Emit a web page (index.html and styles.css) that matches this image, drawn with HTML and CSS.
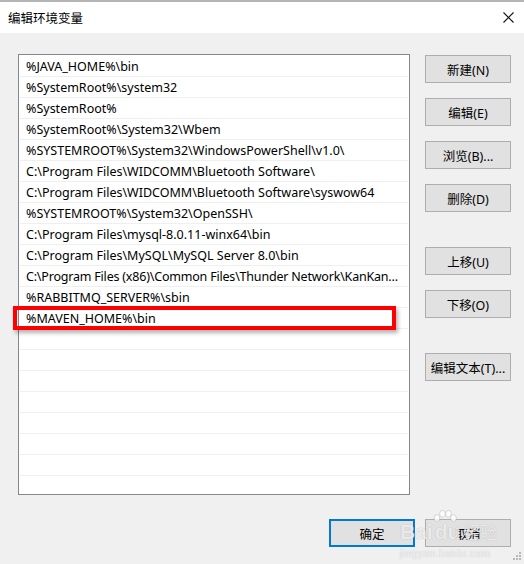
FILE: index.html
```html
<!DOCTYPE html>
<html lang="zh-CN">
<head>
<meta charset="utf-8">
<title>编辑环境变量</title>
<link rel="stylesheet" href="styles.css">
</head>
<body>
<div class="dialog">
  <div class="titlebar">
    <span class="title">编辑环境变量</span>
    <svg class="close" width="11" height="11" viewBox="0 0 11 11"><path d="M0.5 0.5 L10.5 10.5 M10.5 0.5 L0.5 10.5" stroke="#111" stroke-width="1.1" fill="none"/></svg>
  </div>
  <div class="content">
    <div class="main">
      <div class="list">
        <div class="row">%JAVA_HOME%\bin</div>
        <div class="row">%SystemRoot%\system32</div>
        <div class="row">%SystemRoot%</div>
        <div class="row">%SystemRoot%\System32\Wbem</div>
        <div class="row">%SYSTEMROOT%\System32\WindowsPowerShell\v1.0\</div>
        <div class="row">C:\Program Files\WIDCOMM\Bluetooth Software\</div>
        <div class="row">C:\Program Files\WIDCOMM\Bluetooth Software\syswow64</div>
        <div class="row">%SYSTEMROOT%\System32\OpenSSH\</div>
        <div class="row">C:\Program Files\mysql-8.0.11-winx64\bin</div>
        <div class="row">C:\Program Files\MySQL\MySQL Server 8.0\bin</div>
        <div class="row tight">C:\Program Files (x86)\Common Files\Thunder Network\KanKan...</div>
        <div class="row">%RABBITMQ_SERVER%\sbin</div>
        <div class="row">%MAVEN_HOME%\bin</div>
        <div class="row"></div>
        <div class="row"></div>
        <div class="row"></div>
        <div class="row"></div>
        <div class="row"></div>
        <div class="row"></div>
        <div class="row"></div>
        <div class="row"></div>
      </div>
      <div class="side">
        <button class="btn">新建(N)</button>
        <button class="btn">编辑(E)</button>
        <button class="btn">浏览(B)...</button>
        <button class="btn">删除(D)</button>
        <button class="btn gap">上移(U)</button>
        <button class="btn">下移(O)</button>
        <button class="btn gap">编辑文本(T)...</button>
      </div>
    </div>
    <div class="footer">
      <button class="btn default">确定</button>
      <button class="btn">取消</button>
    </div>
  </div>
  <div class="highlight"></div>
  <div class="watermark">
    <div class="wm-logo"><span>Bai</span><svg class="paw" width="24" height="20" viewBox="0 0 24 20"><g fill="rgba(255,255,255,0.85)" stroke="rgba(150,150,150,0.45)" stroke-width="0.8"><ellipse cx="4" cy="8" rx="2.8" ry="3.4"/><ellipse cx="9.5" cy="3.8" rx="2.8" ry="3.4"/><ellipse cx="15.5" cy="3.8" rx="2.8" ry="3.4"/><ellipse cx="20.5" cy="8" rx="2.8" ry="3.4"/></g></svg><span>du</span><span class="wm-cn">经验</span></div>
    <div class="wm-url">jingyan.baidu.com</div>
  </div>
  <svg class="grip" width="10" height="10" viewBox="0 0 10 10"><g fill="#b8b8b8"><rect x="8" y="0" width="2" height="2"/><rect x="5" y="3" width="2" height="2"/><rect x="8" y="3" width="2" height="2"/><rect x="2" y="6" width="2" height="2"/><rect x="5" y="6" width="2" height="2"/><rect x="8" y="6" width="2" height="2"/></g></svg>
</div>
</body>
</html>
```
FILE: styles.css
```css
* { box-sizing: border-box; }
html, body { margin: 0; padding: 0; }
body {
  width: 524px;
  height: 564px;
  overflow: hidden;
  background: #f0f0f0;
  font-family: "Noto Sans", "Noto Sans CJK SC", sans-serif;
  font-size: 12.5px;
  color: #000;
}
.dialog {
  position: relative;
  width: 524px;
  height: 564px;
}
.titlebar {
  height: 33px;
  background: #fff;
  border-top: 2px solid #b4b4b4;
  display: flex;
  align-items: center;
  justify-content: space-between;
  padding: 0 10px 1px 8px;
}
.title {
  font-family: "Noto Sans CJK SC", sans-serif;
  font-size: 12.5px;
}
.close { display: block; }
.content {
  padding: 21px 13px 0 18px;
}
.main {
  display: flex;
  gap: 15px;
}
.list {
  width: 392px;
  height: 441px;
  background: #fff;
  border: 1px solid #828790;
  padding-top: 1px;
  overflow: hidden;
}
.row {
  height: 21px;
  margin: 0 1px;
  padding: 0 6px;
  border-bottom: 1px solid #efefef;
  line-height: 21px;
  white-space: nowrap;
  overflow: hidden;
}
.row.tight {
  padding-right: 0;
  letter-spacing: -0.2px;
}
.side {
  display: flex;
  flex-direction: column;
  gap: 15px;
  padding-top: 1px;
}
.side .gap { margin-top: 20px; }
.btn {
  width: 86px;
  height: 28px;
  background: #e1e1e1;
  border: 1px solid #adadad;
  font-family: "Noto Sans", "Noto Sans CJK SC", sans-serif;
  font-size: 12.5px;
  color: #000;
  padding: 0;
  margin: 0;
}
.btn.default {
  border: 2px solid #0078d7;
}
.footer {
  display: flex;
  justify-content: flex-end;
  gap: 10px;
  margin-top: 24px;
}
.highlight {
  position: absolute;
  left: 13px;
  top: 306px;
  width: 383px;
  height: 24px;
  border: 4px solid #ff0000;
  box-shadow: 2px 3px 4px rgba(0,0,0,0.3);
}
.watermark {
  position: absolute;
  left: 400px;
  top: 510px;
  width: 100px;
  pointer-events: none;
}
.wm-logo {
  display: flex;
  align-items: flex-end;
  font-family: "Liberation Sans", sans-serif;
  font-weight: bold;
  font-size: 21px;
  line-height: 28px;
  color: rgba(255,255,255,0.75);
  text-shadow: 0 0 1px rgba(120,120,120,0.55);
}
.wm-logo .paw { margin: 0 -22px 16px 0; }
.wm-cn {
  font-family: "Noto Sans CJK SC", sans-serif;
  font-weight: normal;
  margin-left: 3px;
  font-size: 17px;
}
.wm-url {
  font-family: "Liberation Sans", sans-serif;
  font-size: 10px;
  letter-spacing: 0.6px;
  color: rgba(255,255,255,0.8);
  text-shadow: 0 0 1px rgba(120,120,120,0.5);
  margin-top: 2px;
}
.grip {
  position: absolute;
  right: 3px;
  bottom: 2px;
}
```
